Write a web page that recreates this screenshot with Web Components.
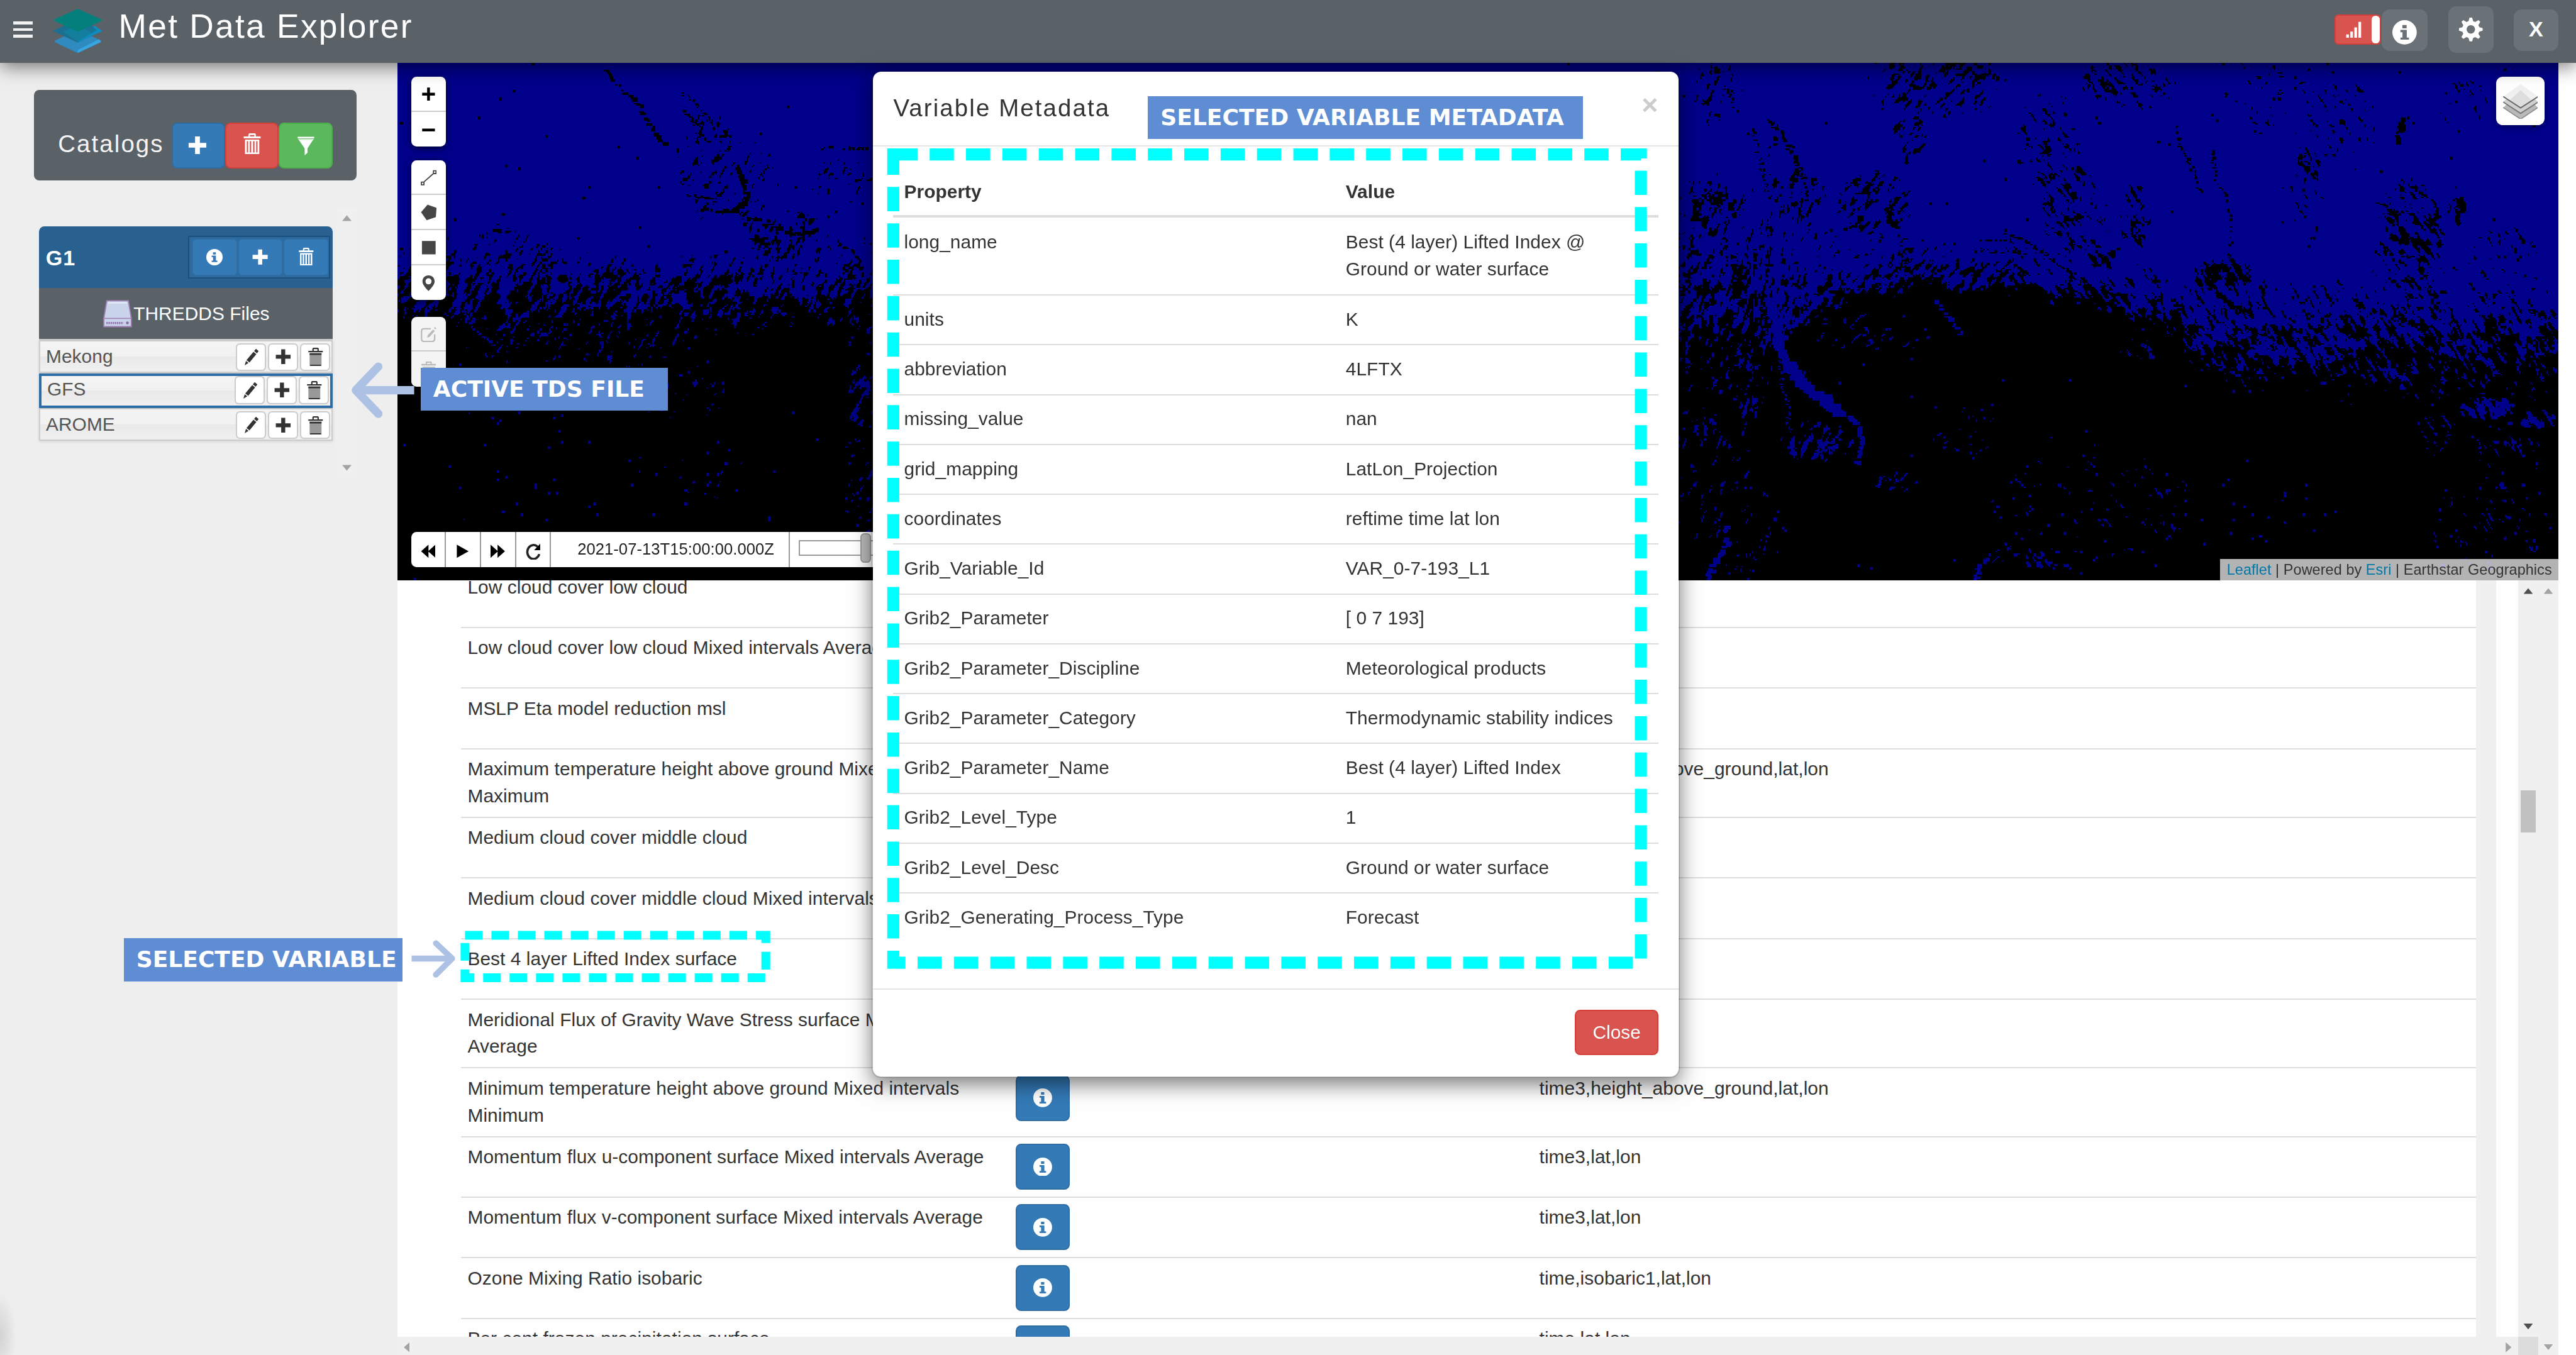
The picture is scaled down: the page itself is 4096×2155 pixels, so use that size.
<!DOCTYPE html>
<html lang="en">
<head>
<meta charset="utf-8">
<title>Met Data Explorer</title>
<style>
html,body{margin:0;padding:0;background:#fff;overflow:hidden}
body{font-family:"Liberation Sans",Arial,sans-serif;font-size:14px;color:#333}
</style>
</head>
<body>
<mde-app></mde-app>
<script>
const define=(name,html,setup)=>{
  const tpl=document.createElement('template');
  tpl.innerHTML=html;
  customElements.define(name,class extends HTMLElement{
    constructor(){super();this.attachShadow({mode:'open'}).appendChild(tpl.content.cloneNode(true));}
    connectedCallback(){if(setup&&!this.ready){this.ready=true;setup(this,this.shadowRoot);}}
  });
};

/* ---------- icons ---------- */
const ICONS={
  plus:'<path d="M7.6 1.2h4.8v6.4h6.4v4.8h-6.4v6.4H7.6v-6.4H1.2V7.6h6.4z"/>',
  info:'<path fill-rule="evenodd" d="M10 0a10 10 0 1 1 0 20a10 10 0 0 1 0-20zM8.2 4v2.7h3.5V4zM6.6 8v1.9h1.7v4.4H6.6V16h7v-1.7h-1.8V8z"/>',
  trash:'<path d="M7 0h6l1 1v2h5v1.9H1V3h5V1zM7.7 1.6V3h4.6V1.6z" fill-rule="evenodd"/><path d="M2.4 6h15.2v14H2.4zM4.3 7.6v10.8h1.4V7.6zM7.5 7.6v10.8h1.5V7.6zM11 7.6v10.8h1.5V7.6zM14.3 7.6v10.8h1.4V7.6z" fill-rule="evenodd"/>',
  bin:'<path d="M7 0h6l1 1v2.4h5v1.7H1V3.400h5V1zM7.700 1.600V3.400h4.600V1.600z" fill-rule="evenodd"/><path fill="#999" d="M2.600 6h14.800v14H2.600z"/><path d="M2.600 6h14.800v2H2.600zM3.200 18.800h13.600V20.200H3.200z"/>',
  filter:'<path d="M1.500 1h17v1.700h-17z"/><path opacity=".75" d="M2 3.200h16l-.6 1.300H2.600z"/><path d="M2.800 4.400h14.400L11.600 13v4.500L8.700 20v-7z"/>',
  pencil:'<path d="M15.200.6l3 2.6-2 2.600-3.200-2.700zM12.300 4l3.300 2.700-7.900 9.600-3.400-2.800zM3.700 14.500l2.900 2.300-4.400 2.700z"/>',
  gear:'<path fill-rule="evenodd" d="M8.900 0h2.200l.9 3 1.700.7L16.500 2.100l1.500 1.500-1.600 2.800.8 1.700 2.800.8v2.200l-2.900.9-.7 1.700 1.600 2.700-1.600 1.600-2.700-1.500-1.700.7-.9 2.900H8.900L8 17.200l-1.700-.7-2.700 1.500L2 16.400l1.600-2.700-.7-1.700L0 11.100V8.900l2.900-.8.7-1.700L2.100 3.600 3.600 2.100l2.700 1.600L8 3zM10 6.400a3.600 3.600 0 1 0 0 7.200a3.600 3.600 0 0 0 0-7.200z"/>',
  back:'<path d="M10.500 1v18L.5 10zM20 1v18L10 10z"/>',
  fwd:'<path d="M9.500 1v18L19.500 10zM0 1v18L10 10z"/>',
  play:'<path d="M2 1l16 9L2 19z"/>',
  reload:'<path fill="none" stroke="#222" stroke-width="2.700" d="M15.500 4.200A7.300 8.300 0 1 0 17.600 13"/><path d="M18.700.6v7.600H11.500z"/>',
  line:'<path fill="none" stroke="#464646" stroke-width="1.400" d="M3.500 15.500L16 4.500M.8 15.300h3.200v3.400H.8zM15.800 1.300H19v3.400h-3.200z"/>',
  penta:'<path fill="#464646" d="M8.500.4L19.600 4.300 18.800 15.800 7.400 19.800.4 9.800z"/>',
  rect:'<path fill="#464646" d="M1.500 1.700h17v16.600h-17z"/>',
  pin:'<path fill="#464646" fill-rule="evenodd" d="M10 0c5 0 7.800 3.500 7.800 7.800C17.800 12 13 17 10 20 7 17 2.200 12 2.200 7.800 2.200 3.500 5 0 10 0zM10 3.600a3.900 4 0 1 0 0 8a3.900 4 0 0 0 0-8z"/>',
  edit:'<path fill="none" stroke="#bbb" stroke-width="1.800" d="M12.500 3H4Q1 3 1 6v9.500Q1 18.800 4 18.800h10q3.300 0 3.300-3.300V10"/><path fill="#bbb" d="M15.500 4l2 1.800-6.500 7.200-3 1 .6-3zM17.600.8l2 1.700-1.300 1.300-1.900-1.700z"/>',
  bin2:'<path fill="#bbb" fill-rule="evenodd" d="M6 0h8v3h6v1.800H0V3h6zM7.600 1.500V3h4.800V1.500zM1.500 6.500h17v2h-17zM2.500 9.500h15V20h-15z"/>',
  signal:'<path d="M.5 15.500h3.300V20H.5zM5.500 12.200h3.300V20H5.500zM10.600 7.200h3.300V20h-3.300zM15.700.5H19V20h-3.300z"/>'
};
define('gl-icon',`<style>:host{display:inline-block;flex:none;width:var(--s,14px);height:var(--h,var(--s,14px));line-height:0}svg{width:100%;height:100%;display:block}</style>`,
(el,root)=>{root.innerHTML+=`<svg viewBox="0 0 20 20" preserveAspectRatio="none" fill="currentColor">${ICONS[el.getAttribute('name')]}</svg>`;});

define('mde-btn',`<style>
:host{display:flex;box-sizing:border-box;align-items:center;justify-content:center;border-radius:4px;border:1px solid #2e6da4;background:#337ab7;color:#fff}
:host([kind=danger]){background:#d9534f;border-color:#d43f3a}
:host([kind=success]){background:#5cb85c;border-color:#4cae4c}
:host([kind=nav]){background:#6a7177;border:0;border-radius:6px}
:host([kind=plain]){background:#fff;border-color:#ccc;color:#333;border-radius:3px}
</style><slot></slot>`);

/* ---------- header ---------- */
define('mde-header',`<style>
:host{display:flex;box-sizing:border-box;height:47px;background:#5a6268;color:#fff;align-items:flex-start;position:relative;z-index:3;box-shadow:0 3px 13px rgba(0,0,0,.52)}
.burger{display:flex;flex-direction:column;gap:2.700px;margin:15.900px 0 0 10px;width:14.200px}
.burger i{display:block;height:2.300px;background:#f1f1f1}
.logo{width:37px;height:33px;margin:6.500px 0 0 15.200px}
h1{margin:0 0 0 12px;font-size:25px;font-weight:400;letter-spacing:1.060px;line-height:28px;padding-top:5.400px;flex:1}
.sw{display:flex;box-sizing:border-box;width:34.700px;height:22.300px;margin-top:10.900px;background:#d9534f;border:1px solid #d43f3a;border-radius:3px;padding:0 0 0 7.500px;align-items:center;justify-content:space-between}
.sw b{display:block;width:6.200px;height:20.300px;border-radius:3px;background:#fff}
.x{font-weight:700;font-size:16px;margin-top:-1.500px}
</style>
<div class="burger"><i></i><i></i><i></i></div>
<svg class="logo" viewBox="0 0 37 33" preserveAspectRatio="none">
<path d="M1.500 23.800Q1 24.200 1.800 25L18.500 33 35.600 25q1-.7 0-1.500L18.500 15.500z" fill="#2f8abf"/><path d="M18.500 33l17.400-8.300-1.600-2L18.500 30.700z" fill="#38a5e0"/>
<path d="M0 16.500L18.500 7.700 37 16.500 18.500 25.200z" fill="#1a7090"/><path d="M22.500 18.200L31 12.500l6 4L18.500 25.200z" fill="#108bc0"/><path d="M22 16.500l8-3.500 2.500 3-5 3z" fill="#177497"/><path d="M8 17l10.500-5L29 18l-10.500 6.500z" fill="#147e9e"/>
<path d="M1.200 9q-.6-.5 0-1.200L18.500 0 36.300 7.800q.9.600 0 1.200L18.500 17.200z" fill="#03807c"/></svg>
<h1>Met Data Explorer</h1>
<div class="sw"><gl-icon name="signal" style="--s:12px;--h:12.500px"></gl-icon><b></b></div>
<mde-btn kind="nav" style="width:34px;height:31.200px;margin:7px 0 0 .4px;padding-top:3px"><gl-icon name="info" style="--s:18.200px"></gl-icon></mde-btn>
<mde-btn kind="nav" style="width:34px;height:34.400px;margin:4.900px 0 0 15.500px"><gl-icon name="gear" style="--s:17.600px"></gl-icon></mde-btn>
<mde-btn kind="nav" style="width:33.100px;height:31.200px;margin:7px 13.200px 0 14.900px"><span class="x">X</span></mde-btn>`);

/* ---------- scrollbar ---------- */
define('mde-scroll',`<style>
:host{display:flex;box-sizing:border-box;flex-direction:column;align-items:center;justify-content:space-between;width:15px;background:#f0f0f0;color:#a3a3a3;padding:5.800px 0 var(--pb,5.800px)}
:host([dark]){color:#505050}
i{display:block;width:7px;height:4.300px;background:currentColor;clip-path:polygon(50% 0,100% 100%,0 100%)}
i.d{clip-path:polygon(0 0,100% 0,50% 100%)}
</style><i></i><slot></slot><i class="d"></i>`);

/* ---------- sidebar ---------- */
define('file-row',`<style>
:host{display:flex;box-sizing:border-box;height:24.300px;border:1px solid #ccc;padding:1.300px .8px 0 4px;align-items:flex-start;color:#555;background:linear-gradient(#f4f4f4,#f1f1f1 49%,#e9e9e9 50%,#f0f0f0);margin-bottom:.6px}
:host([active]){border:2px solid #2c6da8;height:26px;padding-top:.3px;margin-bottom:0}
span{flex:1;line-height:20px}
mde-btn{flex:none;width:22.500px;height:20.800px;margin-left:1.400px}
</style><span><slot></slot></span>
<mde-btn kind="plain"><gl-icon name="pencil" style="--s:13px"></gl-icon></mde-btn>
<mde-btn kind="plain"><gl-icon name="plus" style="--s:12.500px"></gl-icon></mde-btn>
<mde-btn kind="plain"><gl-icon name="bin" style="--s:12px;--h:13.500px"></gl-icon></mde-btn>`);

define('mde-sidebar',`<style>
:host{display:flex;box-sizing:border-box;flex-direction:column;width:296.400px;background:radial-gradient(12px 32px at 0 949px,#d2d2d2,#eee) no-repeat,#eee;padding:20px 30.400px 0 25.200px;align-items:stretch}
.top{display:flex;box-sizing:border-box;height:67.400px;background:#5a6268;border-radius:4px;padding:24.400px 0 0 18px;color:#f4f4f4}
.top span{flex:none;width:84.700px;font-size:18px;letter-spacing:1px;line-height:20px;padding-top:6.200px;white-space:nowrap}
.top mde-btn{width:40px;flex:none;height:34.200px}
.tree{display:flex;margin-top:20.300px;height:202px;justify-content:space-between}
.grp{width:218.700px;margin:14px 0 0 4.100px}
.g1{display:flex;box-sizing:border-box;height:46.200px;background:#286090;border-radius:4px 4px 0 0;color:#fff;font-weight:700;font-size:16px;padding:7.100px 2px 0 4.800px;justify-content:space-between}
.g1 span{line-height:20px;padding-top:6.400px;letter-spacing:.5px}
.bg{display:flex;box-sizing:border-box;width:106px;height:32px;border:1px solid #1d4f7b;background:#2c6aa1;padding:1px 0 1px 2px}
.bg mde-btn{flex:1;border-color:#2e6ca2;border-radius:3px}
.th{display:flex;height:38px;background:#5a6268;color:#fff;align-items:center;justify-content:center;padding-left:.4px}
.th svg{width:21.500px;height:20.400px;margin-right:1.200px}
.rows{background:#ccc;padding-top:.6px;box-shadow:0 1px 2px rgba(0,0,0,.12)}
</style>
<div class="top"><span>Catalogs</span><mde-btn><gl-icon name="plus" style="--s:15px;margin-left:-1px"></gl-icon></mde-btn><mde-btn kind="danger"><gl-icon name="trash" style="--s:14px;--h:15.500px;margin-top:-3px"></gl-icon></mde-btn><mde-btn kind="success"><gl-icon name="filter" style="--s:14.500px"></gl-icon></mde-btn></div>
<div class="tree"><div class="grp">
<div class="g1"><span>G1</span><div class="bg"><mde-btn><gl-icon name="info" style="--s:12.200px"></gl-icon></mde-btn><mde-btn><gl-icon name="plus" style="--s:12.800px"></gl-icon></mde-btn><mde-btn><gl-icon name="trash" style="--s:12px;--h:13.300px;margin-top:-1px"></gl-icon></mde-btn></div></div>
<div class="th"><svg viewBox="0 0 22 20" preserveAspectRatio="none"><path d="M2.800.6h16.400L21.500 13.500v6H.5v-6z" fill="#c9d3ea" stroke="#9d7fb0" stroke-width=".9"/><path d="M4 1.500h14l.4 1.300H3.600z" fill="#dfe6f3"/><path d="M.7 13.500h20.600" stroke="#a588b8" stroke-width=".9"/><path d="M2.500 16.900h13" stroke="#9070b0" stroke-width="1.600" stroke-dasharray="1 .6"/><circle cx="18.500" cy="16.800" r="1.100" fill="#8a6ba6"/></svg><span>THREDDS Files</span></div>
<div class="rows"><file-row>Mekong</file-row><file-row active>GFS</file-row><file-row style="margin:0">AROME</file-row></div>
</div><mde-scroll style="--pb:5.800px"></mde-scroll></div>`);

/* ---------- map ---------- */
const W=1611,H=386;
const hash=(x,y,s=0)=>{let h=(x*374761393+y*668265263+s*2147483647)|0;h=Math.imul(h^(h>>>13),1274126177);h^=h>>>16;return(h>>>0)/4294967296;};
const vn=(x,y,s)=>{const i=Math.floor(x),j=Math.floor(y);let u=x-i,v=y-j;u=u*u*(3-2*u);v=v*v*(3-2*v);
  const a=hash(i,j,s),b=hash(i+1,j,s),c=hash(i,j+1,s),d=hash(i+1,j+1,s);return(a+(b-a)*u)*(1-v)+(c+(d-c)*u)*v;};
/* x, start of speckle, 50% line, end of speckle, grain angle */
const EDGE=[[0,138,165,206,60],[63,118,166,222,60],[110,125,166,232,62],[170,142,168,232,60],[252,144,168,210,65],[311,144,168,190,60],[346,130,160,212,60],[420,130,160,220,60],[900,90,176,262,75],[955,84,180,262,70],[1010,78,178,258,80],[1030,90,204,236,80],[1045,105,190,204,65],[1079,128,170,180,50],[1144,130,161,170,45],[1204,128,161,174,5],[1251,146,173,182,-50],[1315,150,189,203,-60],[1345,158,203,242,-60],[1414,160,203,248,-60],[1466,155,206,254,-55],[1530,155,202,260,-60],[1611,158,200,252,-30]];
/* speckle clusters: cx, cy, rx, ry, strength */
const DARK=[[232,70,26,50,.22],[290,135,34,28,.4],[265,95,20,40,.2],[300,190,40,20,.2],[85,150,30,16,.3],[330,90,22,22,.12],[1125,15,30,26,.5],[1160,12,40,30,.5],[1128,50,14,30,.3],[1230,60,26,40,.22],[1227,75,8,20,.5],[1290,15,36,22,.35],[1250,110,28,36,.45],[1295,115,12,26,.4],[1270,145,12,10,.7],[1100,105,30,26,.45],[1040,100,26,26,.45],[980,110,26,30,.4],[1030,60,10,20,.3],[985,20,20,30,.2],[1420,110,20,26,.22],[1425,75,12,16,.4],[1500,130,28,46,.42],[1510,175,26,30,.42],[1535,108,8,18,.5],[1360,158,24,14,.8],[1372,174,24,22,.55],[1450,45,30,40,.08],[1540,30,20,20,.15],[1400,20,60,40,.05],[1570,150,30,30,.15]];
const LIGHT=[[200,240,60,26,.1],[100,300,90,50,.02],[240,310,50,30,.03],[1240,330,60,60,.035],[1300,330,40,40,.06],[1170,270,40,30,.04],[1098,200,50,16,.08],[1060,282,30,16,.4],[1115,312,18,8,.35],[1215,368,30,10,.2],[1570,290,30,24,.13],[1560,258,26,10,.55],[1592,265,20,8,.5],[1520,275,14,18,.3],[1414,216,30,9,.85],[1480,228,40,12,.5],[1390,205,14,16,.7],[975,285,40,50,.12],[1000,350,40,40,.05],[1560,340,50,40,.06],[1300,215,24,10,.2],[350,300,20,60,.06],[345,250,10,30,.4],[1380,345,120,60,.012],[1000,235,20,40,.25]];
/* lines: colour, width, points */
const LINES=[['k',2.400,[[157,3],[161,14],[170,22],[181,32],[188,46],[195,58],[201,62]]],['k',1.300,[[212,22],[222,30],[232,42],[238,50]]],['k',1.800,[[214,36],[222,44],[228,55]]],['k',2.600,[[253,78],[257,86],[261,98],[260,104]]],['k',3.600,[[258,105],[252,110],[243,111]]],['k',2.200,[[243,111],[226,109]]],['k',2,[[217,99],[232,101],[240,104]]],['k',2.200,[[260,116],[274,118],[284,122]]],['k',3,[[284,123],[296,128],[314,125]]],['k',2.400,[[264,131],[274,134]]],['k',2.200,[[72,125],[86,126]]],['k',1.600,[[318,64],[326,62]]],['k',1.800,[[334,64],[352,64]]],['k',1.800,[[328,134],[338,140],[346,150]]],['k',1.600,[[340,87],[354,87]]],
['k',1.600,[[1327,48],[1330,62],[1337,76],[1344,96]]],['k',1.600,[[1353,66],[1356,88],[1364,100],[1368,128],[1366,145]]],['k',3,[[1495,43],[1492,55],[1492,61]]],['k',2,[[1422,68],[1424,78],[1429,86]]],['k',1.800,[[990,18],[998,36]]],['k',2,[[1022,42],[1032,52],[1040,68],[1048,86],[1052,105]]],['k',1.400,[[1010,50],[1018,80],[1022,96]]],['k',2.400,[[1352,148],[1349,162],[1362,176],[1375,185]]],['k',2,[[1198,126],[1212,132],[1226,142]]],['k',1.400,[[1180,132],[1205,133]]],['k',1.400,[[1182,140],[1215,142]]],['k',1.400,[[1226,140],[1245,155],[1258,168]]],['k',1.400,[[1130,146],[1110,160],[1095,170]]],['k',2.400,[[1080,124],[1094,122]]],['k',1.600,[[1474,104],[1484,106],[1487,122]]],
['b',3,[[1070,168],[1052,184],[1040,196],[1032,210]]],['b',5,[[1024,176],[1030,212],[1038,228]]],['b',7,[[1038,226],[1046,238],[1062,250],[1076,262]]],['b',3,[[1076,260],[1088,268],[1092,284],[1088,300]]],['b',1.500,[[1030,215],[1032,240],[1037,255],[1037,275]]],['b',2.400,[[1148,178],[1158,192],[1168,204]]],['b',3,[[990,344],[992,358],[982,372],[976,386]]],['b',2.400,[[1186,368],[1179,376],[1177,386]]],['b',1.600,[[48,184],[56,198],[72,210]]]];
define('mde-terrain',`<style>:host{display:block}canvas{display:block;width:100%;height:100%;image-rendering:pixelated}</style><canvas width="1611" height="386"></canvas>`,(el,root)=>{
  const g=root.querySelector('canvas').getContext('2d'),im=g.createImageData(W,H);
  const D=(a,x,y)=>{let m=0;for(const[cx,cy,rx,ry,s]of a){const q=((x-cx)/rx)**2+((y-cy)/ry)**2;if(q<1)m=Math.max(m,s*(1-q*q));}return m;};
  for(let x=0;x<W;x++){
    let k=1;while(k<EDGE.length-1&&EDGE[k][0]<x)k++;
    const a=EDGE[k-1],b=EDGE[k],f=Math.min(1,(x-a[0])/(b[0]-a[0])),e=a.map((v,i)=>v+(b[i]-v)*f);
    const th=(Math.abs(a[4]-b[4])>40?b[4]:a[4])*Math.PI/180,c=Math.cos(th),s=Math.sin(th);
    for(let y=0;y<H;y++){
      const w=(vn(x/14,y/14,5)-.5)*16,Y=y+w;
      let t=Y<e[2]?-Math.min(1,(e[2]-Y)/(e[2]-e[1])):Math.min(1,(Y-e[2])/(e[3]-e[2]));
      let d=t<0?.5*Math.pow(1+t,1.400):1-.5*Math.pow(1-t,1.400);
      const cl=vn(x/9,y/9,8);
      d+=(vn(x/7,y/6,11)-.5)*.5*(1-Math.abs(t));
      if(t<=0)d=Math.max(d,.002,D(DARK,x,y)*(.25+cl*1.200)*.85);
      if(t>0)d=Math.min(d,.9988,1-D(LIGHT,x,y)*(.3+cl*1.200));
      const u=x*c-y*s,v=x*s+y*c;
      let n=vn(v/2,u/6,1)*.7+hash(x>>1,y>>1,2)*.3;
      n=(n-.5)*1.500+.5;n=Math.max(0,Math.min(.9999,n));
      if(d<.03||d>.97)n=hash(x>>1,y>>1,3);
      const o=(y*W+x)*4;im.data[o+2]=n<d?0:139;im.data[o+3]=255;
    }
  }
  g.putImageData(im,0,0);
  LINES.forEach(([col,w,p],q)=>{g.fillStyle=col==='k'?'#000':'#00008b';
    for(let i=1;i<p.length;i++){const[x0,y0]=p[i-1],[x1,y1]=p[i],L=Math.hypot(x1-x0,y1-y0);
      for(let z=0;z<L;z+=1.500){const r=hash(i*97+Math.round(z*7),q,4),r2=hash(i*31+Math.round(z*5),q,9);if(r<.22)continue;
        const ww=Math.max(1,Math.round(w*(.5+r*1.100))),hh=Math.max(1,Math.round(w*.8*(.5+r2)));
        g.fillRect(Math.round(x0+(x1-x0)*z/L-ww/2+(r2-.5)*3),Math.round(y0+(y1-y0)*z/L-hh/2+(r-.6)*2),ww,hh);}}});
});

define('map-bar',`<style>
:host{display:flex;flex-direction:column;width:26px;background:#fff;border-radius:4px;box-shadow:0 1px 5px rgba(0,0,0,.65);overflow:hidden}
:host([off]){background:#f4f4f4}
::slotted(*){display:flex;box-sizing:border-box;align-items:center;justify-content:center;height:26.100px;border-bottom:1px solid #ccc;color:#000;padding-top:.8px}
::slotted(:last-child){border-bottom:0}
</style><slot></slot>`);

define('mde-map',`<style>
:host{display:grid;height:385.700px;overflow:hidden;background:#000;position:relative}
mde-terrain,.ui{grid-area:1/1}
mde-terrain{height:385.700px}
.ui{display:flex;flex-direction:column;justify-content:space-between;z-index:1;height:385.700px}
.row{display:flex;justify-content:space-between;align-items:flex-start}
.tools{display:flex;flex-direction:column;padding:10.200px 0 0 10px}
map-bar b{font:700 19px/24px "Liberation Mono",monospace;padding-top:3.400px}
.layers{box-sizing:border-box;width:36.200px;height:36.200px;background:#fff;border-radius:5px;box-shadow:0 1px 5px rgba(0,0,0,.4);margin:10.300px 10.300px 0 0;padding:5.500px 5px}
.layers svg{display:block;width:26.200px;height:26px}
.time{display:flex;box-sizing:border-box;height:26.300px;background:#fff;border-radius:4px 0 0 4px;margin:0 0 9.900px 10px;overflow:hidden;width:700px}
.time div{display:flex;box-sizing:border-box;align-items:center;justify-content:center;width:26.100px;border-right:1px solid #999;color:#000;padding-top:3px}
.time div.t{width:177.800px;font-size:12px;padding:0 0 .4px 9px;color:#222}
.trk{margin:6.300px 0 0 6.600px;box-sizing:border-box;border:1px solid #999;height:11.800px;width:200px;display:flex}
.trk i{display:block;box-sizing:border-box;flex:none;width:7.800px;height:22.200px;margin:-6.200px 0 0 45.300px;border:1px solid #999;background:#bbb;border-radius:3px}
.attr{height:16px;box-sizing:border-box;width:252.200px;background:rgba(255,255,255,.7);font-size:11px;line-height:16.400px;padding-left:5px;white-space:nowrap;align-self:flex-end}
.attr a{color:#0078a8}
</style>
<mde-terrain></mde-terrain>
<div class="ui"><div class="row"><div class="tools">
<map-bar><b>+</b><b>−</b></map-bar>
<map-bar style="margin-top:10px"><span><gl-icon name="line" style="--s:12px"></gl-icon></span><span><gl-icon name="penta" style="--s:12px"></gl-icon></span><span><gl-icon name="rect" style="--s:12px"></gl-icon></span><span><gl-icon name="pin" style="--s:11.600px"></gl-icon></span></map-bar>
<map-bar off style="margin-top:12.300px"><span><gl-icon name="edit" style="--s:12px"></gl-icon></span><span><gl-icon name="bin2" style="--s:11px;--h:12px"></gl-icon></span></map-bar>
</div>
<div class="layers"><svg viewBox="0 0 26 26"><path d="M0 17.500L13 5l13 12.500-13 8.500z" fill="#b9b9b9"/><path d="M0 17.300L13 26l13-8.700" stroke="#8d8d8d" fill="none" stroke-width=".8"/><path d="M0 13L13 3l13 10-13 8.700z" fill="#cfcfcf"/><path d="M0 13.300l13 8.400 13-8.400" stroke="#777" fill="none" stroke-width=".9"/><path d="M0 9L13 0l13 9-13 8.600z" fill="#f0f0f0"/><path d="M4.800 12L13 4.500 21.200 12 13 17.400z" fill="#ddd"/><path d="M0 9.200l13 8.400 13-8.400" stroke="#666" fill="none" stroke-width=".9"/></svg></div></div>
<div class="row" style="align-items:flex-end"><div class="time"><div><gl-icon name="back" style="--s:11px"></gl-icon></div><div><gl-icon name="play" style="--s:11px"></gl-icon></div><div><gl-icon name="fwd" style="--s:11px"></gl-icon></div><div><gl-icon name="reload" style="--s:12.500px"></gl-icon></div><div class="t">2021-07-13T15:00:00.000Z</div><span class="trk"><i></i></span></div>
<div class="attr"><a>Leaflet</a> | Powered by <a>Esri</a> | Earthstar Geographics</div></div></div>`);

/* ---------- variables ---------- */
define('var-row',`<style>
:host{display:grid;grid-template-columns:408.500px 390.300px 1fr;box-sizing:border-box;height:45.200px;border-top:1px solid #ddd;padding:4.900px 0 0 5.100px;line-height:20.080px}
:host([tall]){height:51.220px}
.n{padding-right:8px}
mde-btn{width:40.300px;height:34.200px}
</style><div class="n"><slot></slot></div><mde-btn><gl-icon name="info" style="--s:14px"></gl-icon></mde-btn><div class="d"></div>`,
(el,root)=>{root.querySelector('.d').textContent=el.getAttribute('dims')||'';});

define('var-table',`<style>
:host{display:flex;height:577.300px;overflow:hidden}
.main{display:flex;flex-direction:column;width:1580.500px}
.view{display:flex;height:564.100px;overflow:hidden;padding-left:47px;background:#fefefe}
.tbl{width:1502.300px;margin-top:-10.700px;flex:none}
.gut{width:15px;background:#f0f0f0;flex:none}
.h{display:flex;flex:1;background:#f0f0f0;justify-content:space-between;padding:3.900px 5px 0 4.600px}
.h i{display:block;width:4.300px;height:7.500px;background:#a3a3a3;clip-path:polygon(0 50%,100% 0,100% 100%)}
.h i.r{clip-path:polygon(0 0,100% 50%,0 100%)}
.c{display:flex;flex-direction:column;width:15px}
.c mde-scroll{flex:none;height:564.100px}
.corner{flex:1;background:#dcdcdc}
.thumb{display:block;width:11px;height:31.300px;background:#c1c1c1}
.track{display:flex;flex-direction:column;flex:1;padding-top:146.400px}
</style>
<div class="main"><div class="view"><div class="tbl">
<var-row>Low cloud cover low cloud</var-row>
<var-row>Low cloud cover low cloud Mixed intervals Average</var-row>
<var-row>MSLP Eta model reduction msl</var-row>
<var-row tall dims="time3,height_above_ground,lat,lon">Maximum temperature height above ground Mixed intervals Maximum</var-row>
<var-row>Medium cloud cover middle cloud</var-row>
<var-row>Medium cloud cover middle cloud Mixed intervals</var-row>
<var-row>Best 4 layer Lifted Index surface</var-row>
<var-row tall>Meridional Flux of Gravity Wave Stress surface Mixed intervals Average</var-row>
<var-row tall dims="time3,height_above_ground,lat,lon">Minimum temperature height above ground Mixed intervals Minimum</var-row>
<var-row dims="time3,lat,lon">Momentum flux u-component surface Mixed intervals Average</var-row>
<var-row dims="time3,lat,lon">Momentum flux v-component surface Mixed intervals Average</var-row>
<var-row dims="time,isobaric1,lat,lon">Ozone Mixing Ratio isobaric</var-row>
<var-row dims="time,lat,lon">Per cent frozen precipitation surface</var-row>
</div><div class="gut"></div></div><div class="h"><i></i><i class="r"></i></div></div>
<div class="c"><mde-scroll dark><div class="track"><span class="thumb"></span></div></mde-scroll><div class="corner"></div></div>
<mde-scroll style="height:577.300px;--pb:3.600px"></mde-scroll>`);

/* ---------- modal ---------- */
const META=[['long_name','Best (4 layer) Lifted Index @ Ground or water surface'],['units','K'],['abbreviation','4LFTX'],['missing_value','nan'],['grid_mapping','LatLon_Projection'],['coordinates','reftime time lat lon'],['Grib_Variable_Id','VAR_0-7-193_L1'],['Grib2_Parameter','[ 0 7 193]'],['Grib2_Parameter_Discipline','Meteorological products'],['Grib2_Parameter_Category','Thermodynamic stability indices'],['Grib2_Parameter_Name','Best (4 layer) Lifted Index'],['Grib2_Level_Type','1'],['Grib2_Level_Desc','Ground or water surface'],['Grib2_Generating_Process_Type','Forecast']];
define('meta-row',`<style>
:host{display:grid;grid-template-columns:329.200px 1fr;box-sizing:border-box;height:37.150px;border-top:1px solid #ddd;padding:7.900px 8px 0;line-height:20.080px}
:host([tall]){height:57.200px}
:host([first]){border-top:0;padding-top:8.600px}
:host([head]){border-top:0;font-weight:700;height:38px;border-bottom:2px solid #ddd;padding-top:8.800px}
</style><slot name="k"></slot><slot name="v"></slot>`);
define('meta-modal',`<style>
:host{display:flex;flex-direction:column;box-sizing:border-box;width:602.200px;height:751px;background:#fff;border:1px solid rgba(0,0,0,.2);border-radius:7px;box-shadow:0 5px 15px rgba(0,0,0,.5);background-clip:padding-box}
header{display:flex;justify-content:space-between;box-sizing:border-box;height:56px;border-bottom:1px solid #e5e5e5;padding:17.400px 15.300px 0 15px}
h4{margin:0;font-size:18px;font-weight:400;letter-spacing:1px;line-height:20px}
.x{font-weight:700;font-size:21px;line-height:21px;color:#ccc;margin-top:-3px}
.body{flex:1;padding:15px 15px 0}
footer{display:flex;justify-content:flex-end;box-sizing:border-box;height:65.700px;border-top:1px solid #e5e5e5;padding:15px 15px 0}
footer mde-btn{width:62.300px;height:34.200px}
</style>
<header><h4>Variable Metadata</h4><span class="x">×</span></header>
<div class="body"><meta-row head><span slot="k">Property</span><span slot="v">Value</span></meta-row></div>
<footer><mde-btn kind="danger">Close</mde-btn></footer>`,(el,root)=>{
  const b=root.querySelector('.body');
  META.forEach(([k,v],i)=>{const r=document.createElement('meta-row');if(!i){r.setAttribute('tall','');r.setAttribute('first','');}
    const a=document.createElement('span'),c=document.createElement('span');a.slot='k';c.slot='v';a.textContent=k;c.textContent=v;if(!i)c.style.maxWidth='200px';r.append(a,c);b.append(r);});
});

/* ---------- annotations ---------- */
define('call-out',`<style>
:host{display:block;box-sizing:border-box;background:#5e8dd3;color:#fff;font:700 16.900px/32px "DejaVu Sans",sans-serif;letter-spacing:0;height:32px;white-space:nowrap;padding:0 0 0 9.300px}
</style><slot></slot>`);

define('mde-app',`<style>
:host{display:block;zoom:2.133333;width:1920px;height:1010.160px;position:relative;overflow:hidden;background:#fff;line-height:20px;letter-spacing:.028px}
.body{display:flex;height:963.200px}
main{width:1610.500px}
.over{position:absolute;z-index:5}
svg.over{left:0;top:0;width:1920px;height:1010px}
</style>
<mde-header></mde-header>
<div class="body"><mde-sidebar></mde-sidebar><main><mde-map></mde-map><var-table></var-table></main></div>
<meta-modal class="over" style="left:649.900px;top:52.300px"></meta-modal>
<svg class="over" viewBox="0 0 1920 1010">
<g fill="none" stroke="#adc1e5" stroke-linecap="round" stroke-linejoin="round"><path stroke-width="6.200" d="M282 273.300L265.200 290.900 282 308.500"/><path stroke-linecap="butt" stroke-width="6.200" d="M266 290.900H308.700"/>
<path stroke-width="4.400" d="M324.900 703.200L337 714.600 324.900 726.600"/><path stroke-linecap="butt" stroke-width="4.400" d="M306.800 714.600H336"/></g>
<rect x="346.600" y="697.300" width="224.200" height="31.600" fill="none" stroke="#0ff" stroke-width="6.600" stroke-dasharray="13.140 6.570"/>
<rect x="665.800" y="115.100" width="557.200" height="602.600" fill="none" stroke="#0ff" stroke-width="9" stroke-dasharray="18.070 9.040"/></svg>
<call-out class="over" style="left:313.600px;top:274.100px;width:184.400px">ACTIVE TDS FILE</call-out>
<call-out class="over" style="left:855.700px;top:71.500px;width:324.100px">SELECTED VARIABLE METADATA</call-out>
<call-out class="over" style="left:92.300px;top:699.600px;width:207.900px">SELECTED VARIABLE</call-out>`);
</script>
</body>
</html>
